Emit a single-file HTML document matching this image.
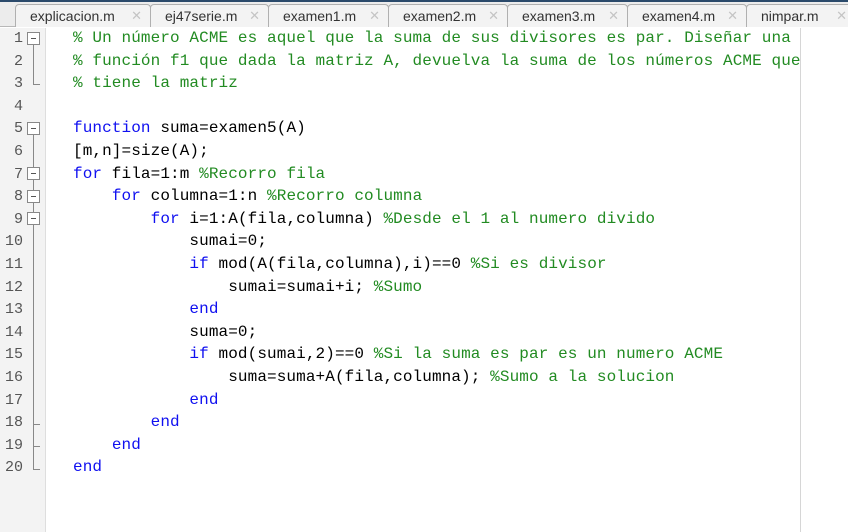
<!DOCTYPE html>
<html><head><meta charset="utf-8"><style>
*{margin:0;padding:0;box-sizing:border-box}
body{width:848px;height:532px;overflow:hidden;background:#fff;position:relative;font-family:"Liberation Mono",monospace}
#top{position:absolute;left:0;top:0;width:848px;height:2px;background:#2b4a6b}
#tabs{position:absolute;left:0;top:2px;width:848px;height:25px;background:#ececec;border-bottom:1px solid #b8b8b8}
.tab{position:absolute;top:2px;height:23px;border:1px solid #b0b0b0;border-bottom:none;border-radius:4px 4px 0 0;background:#f3f3f3;font:14px "Liberation Sans",sans-serif;color:#333;line-height:22px;padding-left:14px}
.tab span{position:absolute;right:8px;top:0;color:#c4c4c4;font-size:13px}
#gut{position:absolute;left:0;top:28px;width:46px;height:504px;background:#f3f3f3;border-right:1px solid #dedede}
#margin{position:absolute;left:800px;top:28px;width:1px;height:504px;background:#d6d6d6}
.ln{position:absolute;left:0;width:23px;text-align:right;font-size:15px;color:#555;height:22.6px;line-height:22.6px}
.code{position:absolute;left:73px;font-size:16px;letter-spacing:0.1px;height:22.6px;line-height:23.6px;white-space:pre;color:#000}
.c{color:#228b22}.k{color:#1010f0}
.box{position:absolute;left:27px;width:13px;height:13px;border:1px solid #888;background:#fff}
.box:after{content:"";position:absolute;left:3px;top:5px;width:5px;height:1px;background:#555}
.vl{position:absolute;left:33px;width:1px;background:#888}
.tk{position:absolute;left:33px;width:7px;height:1px;background:#888}
</style></head><body>
<div id="top"></div>
<div id="tabs">
<div class="tab" style="left:15px;width:136px">explicacion.m<span>✕</span></div>
<div class="tab" style="left:150px;width:119px">ej47serie.m<span>✕</span></div>
<div class="tab" style="left:268px;width:121px">examen1.m<span>✕</span></div>
<div class="tab" style="left:388px;width:120px">examen2.m<span>✕</span></div>
<div class="tab" style="left:507px;width:121px">examen3.m<span>✕</span></div>
<div class="tab" style="left:627px;width:120px">examen4.m<span>✕</span></div>
<div class="tab" style="left:746px;width:110px">nimpar.m<span>✕</span></div>
</div>
<div id="gut"></div>
<div id="margin"></div>
<div class="vl" style="top:44px;height:40px"></div><div class="tk" style="top:84px"></div>
<div class="vl" style="top:134px;height:335px"></div><div class="tk" style="top:469px"></div>
<div class="tk" style="top:446px"></div><div class="tk" style="top:424px"></div>
<div class="box" style="top:32px"></div>
<div class="box" style="top:122px"></div>
<div class="box" style="top:167px"></div>
<div class="box" style="top:190px"></div>
<div class="box" style="top:212px"></div>
<div class="ln" style="top:28px">1</div><div class="ln" style="top:50.6px">2</div><div class="ln" style="top:73.2px">3</div><div class="ln" style="top:95.8px">4</div><div class="ln" style="top:118.4px">5</div><div class="ln" style="top:141px">6</div><div class="ln" style="top:163.6px">7</div><div class="ln" style="top:186.2px">8</div><div class="ln" style="top:208.8px">9</div><div class="ln" style="top:231.4px">10</div><div class="ln" style="top:254px">11</div><div class="ln" style="top:276.6px">12</div><div class="ln" style="top:299.2px">13</div><div class="ln" style="top:321.8px">14</div><div class="ln" style="top:344.4px">15</div><div class="ln" style="top:367px">16</div><div class="ln" style="top:389.6px">17</div><div class="ln" style="top:412.2px">18</div><div class="ln" style="top:434.8px">19</div><div class="ln" style="top:457.4px">20</div>
<div class="code c" style="top:27px">% Un número ACME es aquel que la suma de sus divisores es par. Diseñar una</div>
<div class="code c" style="top:49.6px">% función f1 que dada la matriz A, devuelva la suma de los números ACME que</div>
<div class="code c" style="top:72.2px">% tiene la matriz</div>
<div class="code" style="top:117.4px"><span class="k">function</span> suma=examen5(A)</div>
<div class="code" style="top:140px">[m,n]=size(A);</div>
<div class="code" style="top:162.6px"><span class="k">for</span> fila=1:m <span class="c">%Recorro fila</span></div>
<div class="code" style="top:185.2px">    <span class="k">for</span> columna=1:n <span class="c">%Recorro columna</span></div>
<div class="code" style="top:207.8px">        <span class="k">for</span> i=1:A(fila,columna) <span class="c">%Desde el 1 al numero divido</span></div>
<div class="code" style="top:230.4px">            sumai=0;</div>
<div class="code" style="top:253px">            <span class="k">if</span> mod(A(fila,columna),i)==0 <span class="c">%Si es divisor</span></div>
<div class="code" style="top:275.6px">                sumai=sumai+i; <span class="c">%Sumo</span></div>
<div class="code" style="top:298.2px">            <span class="k">end</span></div>
<div class="code" style="top:320.8px">            suma=0;</div>
<div class="code" style="top:343.4px">            <span class="k">if</span> mod(sumai,2)==0 <span class="c">%Si la suma es par es un numero ACME</span></div>
<div class="code" style="top:366px">                suma=suma+A(fila,columna); <span class="c">%Sumo a la solucion</span></div>
<div class="code" style="top:388.6px">            <span class="k">end</span></div>
<div class="code" style="top:411.2px">        <span class="k">end</span></div>
<div class="code" style="top:433.8px">    <span class="k">end</span></div>
<div class="code" style="top:456.4px"><span class="k">end</span></div>
</body></html>
